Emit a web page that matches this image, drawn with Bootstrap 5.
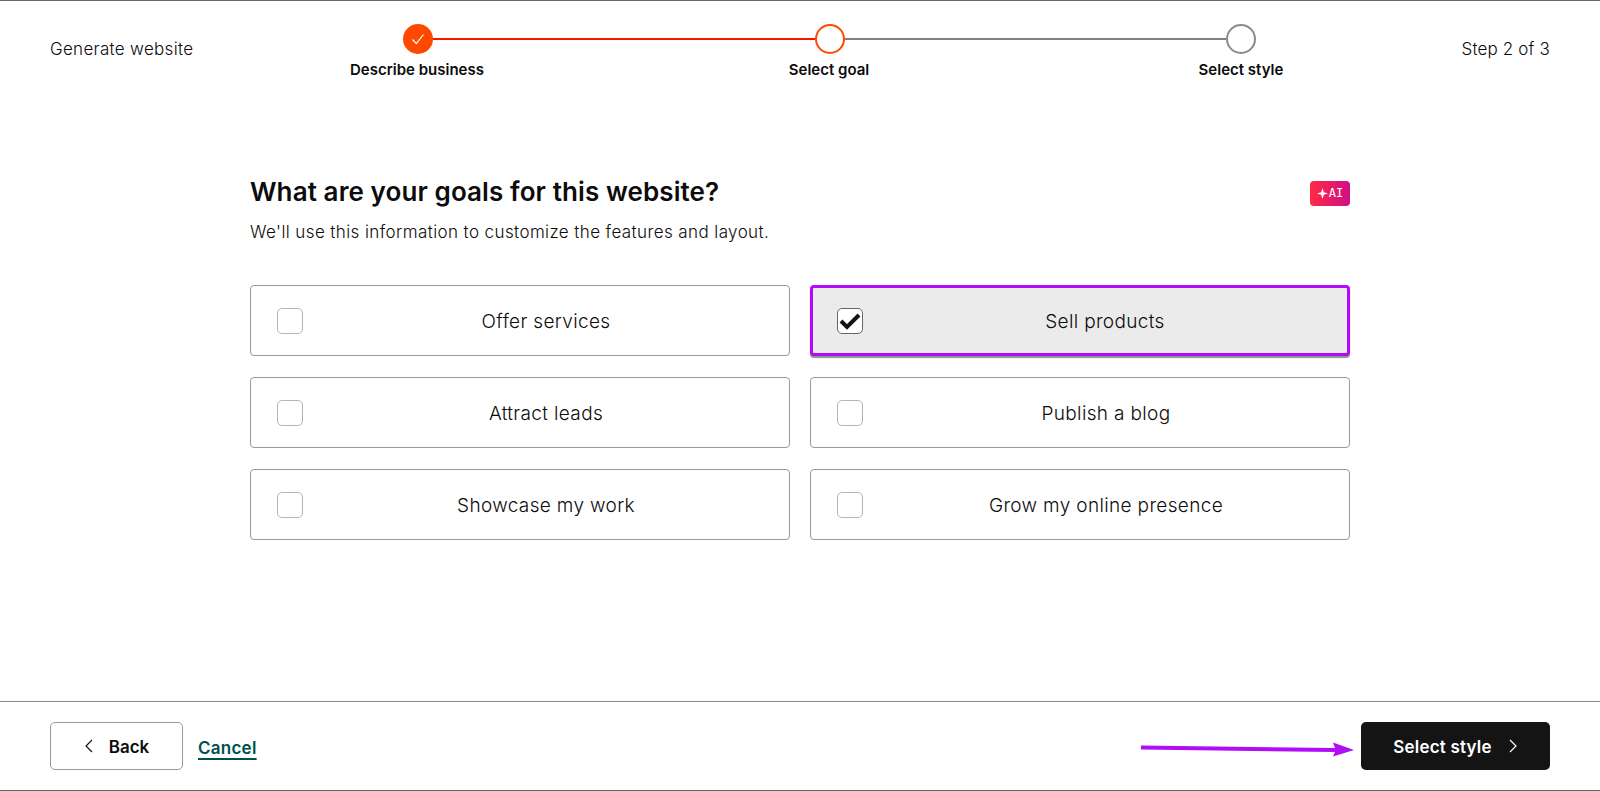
<!DOCTYPE html>
<html lang="en">
<head>
<meta charset="utf-8">
<title>Generate website</title>
<link href="https://cdn.jsdelivr.net/npm/bootstrap@5.3.0/dist/css/bootstrap.min.css" rel="stylesheet">
<style>
html,body{height:100%}
body{font-family:Inter,"Liberation Sans",sans-serif;font-weight:300;color:#0c0c0c;background:#fff}
.shell{height:791px;border-top:1px solid #666;border-bottom:1px solid #666}
.wizard-head{padding:0 50px;height:100px}
.head-title{width:161px;font-size:17px;margin-top:31px;line-height:34px;letter-spacing:.3px;white-space:nowrap}
.head-step{font-size:17px;margin-top:31px;line-height:34px;letter-spacing:.15px;white-space:nowrap}
.stepper{width:1236px}
.rail{padding:0 191px 0 192px;margin-top:23px}
.node{width:30px;height:30px;border-radius:50%;flex:none;border:2px solid #8a8a8a;background:#fff}
.node-done{background:#ff4800;border-color:#ff4800}
.node-now{border-color:#ff4800}
.link-line{height:2px;flex:1 1 auto;background:#808080}
.link-red{background:#f51800}
.step-names{margin-top:6px}
.step-name{width:412px;text-align:center;font-size:15px;font-weight:600;line-height:20px}
.goal-wrap{width:1100px;margin:75px auto 0}
.goal-title{font-size:26px;font-weight:600;line-height:32px;margin:0;letter-spacing:.1px;color:#0c0c0c}
.goal-sub{font-size:17px;line-height:24px;margin:12px 0 0;letter-spacing:.4px}
.ai-tag{width:40px;height:25px;border-radius:4px;background:linear-gradient(90deg,#ff2a45,#d00f85);color:#fff;font-family:"DejaVu Sans Mono",monospace;font-size:12px;line-height:25px;margin-top:5px;gap:1px}
.goal-grid{display:grid;grid-template-columns:540px 540px;gap:21px 20px;margin-top:41px}
.goal-opt{height:71px;border:1px solid #999;border-radius:4px;padding-left:26px;background:#fff;font-size:19px;letter-spacing:.35px}
.goal-opt.is-on{background:#ebebeb;border:3px solid #b00cf5;padding-left:24px;box-shadow:0 2px 1px #8f8f8f}
.tick{width:26px;height:26px;flex:none;border:1px solid #b5b5b5;border-radius:5px;background:#fff}
.is-on .tick{border-color:#666}
.opt-text{flex:1 1 auto;text-align:center;padding-top:3px}
.wizard-foot{height:89px;border-top:1px solid #8a8a8a;padding:20px 50px 0;position:relative;margin-top:auto}
.back-btn{width:133px;height:48px;border:1px solid #999;border-radius:5px;font-size:17px;font-weight:600;color:#0c0c0c;background:#fff;padding:0;gap:15px}
.back-btn:hover{color:#0c0c0c;border-color:#999}
.btn-txt{padding-top:3px}
.cancel-lnk{margin-left:15px;font-size:17px;line-height:48px;padding-top:2px;font-weight:600;color:#00504d;text-decoration-thickness:2px;text-underline-offset:4px;letter-spacing:.25px}
.next-btn{width:189px;height:48px;border-radius:5px;border:0;background:#141414;color:#fff;font-size:17px;font-weight:600;letter-spacing:.2px;padding:0;gap:16px}
.next-btn:hover{background:#141414;color:#fff}
.annot{position:absolute;left:1141px;top:40px}
</style>
</head>
<body>
<div class="shell d-flex flex-column">
  <header class="wizard-head d-flex justify-content-between align-items-start">
    <div class="head-title">Generate website</div>
    <div class="stepper flex-shrink-0">
      <div class="rail d-flex align-items-center">
        <span class="node node-done d-flex align-items-center justify-content-center">
          <svg width="14" height="14" viewBox="0 0 14 14" fill="none" stroke="#fff" stroke-width="1.2"><path d="M1.5 7.5 5.3 11.5 12.5 2.5"/></svg>
        </span>
        <span class="link-line link-red"></span>
        <span class="node node-now"></span>
        <span class="link-line"></span>
        <span class="node"></span>
      </div>
      <div class="step-names d-flex">
        <div class="step-name">Describe business</div>
        <div class="step-name">Select goal</div>
        <div class="step-name">Select style</div>
      </div>
    </div>
    <div class="head-step ms-auto">Step 2 of 3</div>
  </header>
  <main class="goal-wrap">
    <div class="d-flex justify-content-between align-items-start">
      <h1 class="goal-title">What are your goals for this website?</h1>
      <span class="ai-tag d-inline-flex align-items-center justify-content-center">
        <svg width="11" height="11" viewBox="0 0 10 10" fill="#fff"><path d="M5 0 6.2 3.8 10 5 6.2 6.2 5 10 3.8 6.2 0 5 3.8 3.8Z"/></svg>AI
      </span>
    </div>
    <p class="goal-sub">We'll use this information to customize the features and layout.</p>
    <div class="goal-grid">
      <div class="goal-opt d-flex align-items-center"><span class="tick"></span><span class="opt-text">Offer services</span></div>
      <div class="goal-opt is-on d-flex align-items-center"><span class="tick d-flex align-items-center justify-content-center">
        <svg width="22" height="18" viewBox="0 0 22 18" fill="none" stroke="#141414" stroke-width="4"><path d="M2 9 8 15 20 3"/></svg>
      </span><span class="opt-text">Sell products</span></div>
      <div class="goal-opt d-flex align-items-center"><span class="tick"></span><span class="opt-text">Attract leads</span></div>
      <div class="goal-opt d-flex align-items-center"><span class="tick"></span><span class="opt-text">Publish a blog</span></div>
      <div class="goal-opt d-flex align-items-center"><span class="tick"></span><span class="opt-text">Showcase my work</span></div>
      <div class="goal-opt d-flex align-items-center"><span class="tick"></span><span class="opt-text">Grow my online presence</span></div>
    </div>
  </main>
  <footer class="wizard-foot d-flex align-items-start">
    <button class="btn back-btn d-flex align-items-center justify-content-center" type="button">
      <svg width="10" height="14" viewBox="0 0 10 14" fill="none" stroke="#141414" stroke-width="1.2"><path d="M8 1 2 7l6 6"/></svg><span class="btn-txt">Back</span>
    </button>
    <a class="cancel-lnk" href="#">Cancel</a>
    <button class="btn next-btn ms-auto d-flex align-items-center justify-content-center" type="button"><span class="btn-txt">Select style</span>
      <svg width="10" height="14" viewBox="0 0 10 14" fill="none" stroke="#fff" stroke-width="1.2"><path d="M2 1l6 6-6 6"/></svg>
    </button>
    <svg class="annot" width="214" height="16" viewBox="0 0 214 16"><path fill="#b00cf5" d="M0 3.5 194 6 192 .5 213 8 192 14.5 194 10 0 7.5Z"/></svg>
  </footer>
</div>
</body>
</html>
